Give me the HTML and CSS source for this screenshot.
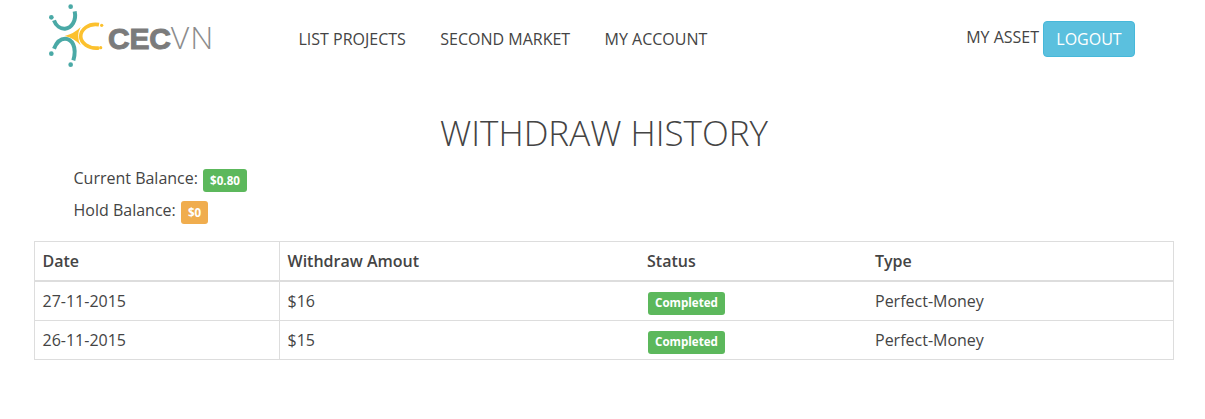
FILE: index.html
```html
<!DOCTYPE html>
<html lang="en">
<head>
<meta charset="utf-8">
<title>Withdraw History</title>
<link rel="stylesheet" href="styles.css">
</head>
<body>
<header class="navbar">
  <a class="brand" href="#">
    <svg class="brand-mark" width="60" height="66" viewBox="45 6 180 198" aria-hidden="true">
      <g fill="none" stroke="#4aa9a6" stroke-width="12">
        <path d="M134 34C140 62 125 84 105 86C92 87 78 78 72 61"/>
        <path d="M72 146C80 126 92 116 105 116C125 116 142 140 130 181"/>
      </g>
      <g fill="#4aa9a6">
        <circle cx="122" cy="20" r="7"/>
        <circle cx="64" cy="52" r="7"/>
        <circle cx="64" cy="161" r="7"/>
        <circle cx="122" cy="194" r="7"/>
      </g>
      <path d="M207 74C175 68 152 90 152 109C152 128 175 148 207 144" fill="none" stroke="#fcc12e" stroke-width="11"/>
      <path d="M104 108Q132 101 152 81Q137 108 152 136Q132 114 104 108Z" fill="#fcc12e"/>
      <circle cx="215" cy="76" r="5" fill="#fcc12e"/>
      <circle cx="212" cy="143" r="5" fill="#fcc12e"/>
    </svg>
    <span class="brand-name"><b>CEC</b>VN</span>
  </a>
  <nav class="nav-main">
    <a href="#">LIST PROJECTS</a>
    <a href="#">SECOND MARKET</a>
    <a href="#">MY ACCOUNT</a>
  </nav>
  <div class="nav-right">
    <a class="asset" href="#">MY ASSET</a>
    <a class="logout" href="#">LOGOUT</a>
  </div>
</header>
<main class="content">
  <h1>WITHDRAW HISTORY</h1>
  <p class="balance">Current Balance: <span class="label green">$0.80</span></p>
  <p class="balance">Hold Balance: <span class="label orange">$0</span></p>
  <table>
    <thead>
      <tr><th class="c1">Date</th><th class="c2">Withdraw Amout</th><th class="c3">Status</th><th>Type</th></tr>
    </thead>
    <tbody>
      <tr><td>27-11-2015</td><td>$16</td><td><span class="label green">Completed</span></td><td>Perfect-Money</td></tr>
      <tr><td>26-11-2015</td><td>$15</td><td><span class="label green">Completed</span></td><td>Perfect-Money</td></tr>
    </tbody>
  </table>
</main>
</body>
</html>
```
FILE: styles.css
```css
* { box-sizing: border-box; }
html, body { margin: 0; padding: 0; }
body {
  font-family: "Open Sans", sans-serif;
  font-size: 16px;
  line-height: 24px;
  color: #444;
  background: #fff;
}
a { color: inherit; text-decoration: none; }
.navbar {
  display: flex;
  align-items: flex-start;
  height: 78px;
  padding-left: 45px;
}
.brand {
  display: flex;
  align-items: flex-start;
  width: 253.500px;
  height: 70px;
  padding-top: 2px;
}
.brand-mark { flex: none; }
.brand-name {
  font-size: 32px;
  line-height: 36px;
  letter-spacing: 1px;
  color: #8c8c8c;
  margin-left: 3px;
  margin-top: 17px;
  font-weight: 300;
  white-space: nowrap;
}
.brand-name b {
  font-family: "Liberation Sans", sans-serif;
  font-size: 30px;
  color: #7b7b7b;
  font-weight: 700;
  letter-spacing: -0.2px;
  -webkit-text-stroke: 1px #7b7b7b;
}
.nav-main {
  display: flex;
  gap: 34.400px;
  padding-top: 27px;
}
.nav-right {
  display: flex;
  align-items: flex-start;
  margin-left: auto;
  margin-right: 70px;
  padding-top: 21px;
}
.asset { margin-top: 4px; margin-right: 4px; }
.logout {
  display: block;
  width: 92px;
  height: 36px;
  line-height: 34px;
  text-align: center;
  color: #fff;
  background: #5bc0de;
  border: 1px solid #46b8da;
  border-radius: 4px;
}
.content {
  width: 1140px;
  margin-left: 34px;
}
h1 {
  margin: 33px 0 0;
  font-size: 35px;
  line-height: 44px;
  font-weight: 300;
  text-align: center;
  color: #444;
}
.balance {
  margin: 0 0 8px 39.500px;
  height: 24px;
}
h1 + .balance { margin-top: 11px; }
.label {
  display: inline-block;
  margin-left: 1px;
  padding: 3px 7px;
  font-size: 11.600px;
  line-height: 17px;
  font-weight: 700;
  color: #fff;
  border-radius: 3px;
  vertical-align: -1px;
}
.green { background: #5cb85c; }
.orange { background: #f0ad4e; }
table {
  width: 1140px;
  margin-top: 19px;
  border-collapse: collapse;
  table-layout: fixed;
}
th, td {
  border-top: 1px solid #ddd;
  border-bottom: 1px solid #ddd;
  padding: 7px 7.500px;
  text-align: left;
  vertical-align: top;
}
th:first-child, td:first-child { border-left: 1px solid #ddd; border-right: 1px solid #ddd; }
th:last-child, td:last-child { border-right: 1px solid #ddd; }
th { font-weight: 600; height: 39px; padding-bottom: 5px; border-bottom-width: 2px; }
td { height: 39px; }
.c1 { width: 245px; }
.c2 { width: 360px; }
.c3 { width: 228px; }
td .label { display: block; width: fit-content; margin: 3px 0 -2px 1px; padding: 2px 7px 4px; }
```
